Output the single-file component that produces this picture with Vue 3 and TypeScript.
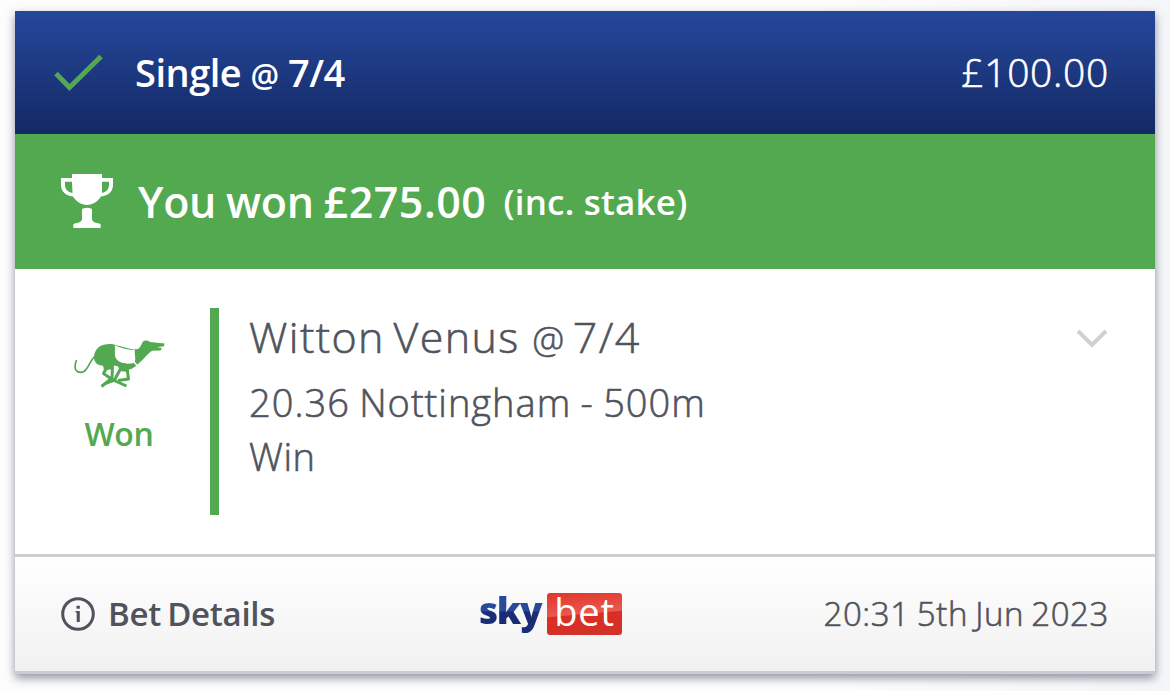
<script setup lang="ts">
interface Selection {
  name: string
  odds: string
  event: string
  market: string
}

const selection: Selection = {
  name: 'Witton Venus',
  odds: '7/4',
  event: '20.36 Nottingham - 500m',
  market: 'Win',
}
</script>

<template>
  <main class="page">
    <article class="slip">
      <header class="head">
        <svg class="tick" width="50" height="40" viewBox="0 0 50 40">
          <path d="M2 19.500 15.500 33.500 47 2.500" fill="none" stroke="#52a950" stroke-width="5" />
        </svg>
        <h1 class="bet-type">Single <span class="at">@</span> {{ selection.odds }}</h1>
        <span class="stake">£100.00</span>
      </header>

      <section class="result">
        <svg class="trophy" width="54" height="56" viewBox="0 0 54 56" fill="#fff">
          <path d="M12 1H42V5H53V12C53 18 48.500 23 41 23.500 38 28 33 32 27 32S16 28 13 23.500C5.500 23 1 18 1 12V5H12Z M12 8.700H5V12C5 16 7.500 19 12.500 20Z M42 8.700V20C46.500 19 49 16 49 12V8.700Z" fill-rule="evenodd" />
          <path d="M22 36Q27 33.500 32 36V46.500Q33 49.500 37 50 40.700 50.500 40.700 52V55H13.300V52Q13.300 50.500 17 50 21 49.500 22 46.500Z" />
        </svg>
        <strong class="won">You won <span class="amount">£275.00</span></strong>
        <span class="inc">(inc. stake)</span>
      </section>

      <section class="pick">
        <div class="status">
          <svg class="dog" width="94" height="52" viewBox="0 0 94 52">
            <path d="M4.500 22C3 26 2.500 29 3.800 32 6 35 11 35.500 14 31.500 17 28 18 23 23 18" fill="none" stroke="#52a950" stroke-width="1.700" />
            <path d="M22 19C22.500 10 29 5.500 40 6L51 9 61 11.500 66 11C69 9 70 5 71 3.500 73.500 2 76 2.500 78 4L92.500 5.500 92 8.300 85 9.200 90 10 88.500 12.500 80 12.800C75 16 69 25 61 30 57 32.500 51 31.500 48 29.500 43 26.500 40 27.500 35 28 27 28 22 26 22 19Z" fill="#52a950" />
            <path d="M42.800 7.200C48 9.500 56 12.300 63 12 62 16 64.500 21 62.500 24.800 56 26.500 48 26 44 20.500 42 16 43.500 12 42.800 7.200Z" fill="#fff" />
            <path d="M61.500 23.500 65.500 28" stroke="#fff" stroke-width="1.500" />
            <path d="M36 27 31.500 35.500 41 42 54.500 48 M40.500 26.500 40 40 29.500 48.500 M49.500 29 42.500 42 32 46 M55 30 56.500 41 46 42.500" fill="none" stroke="#52a950" stroke-width="3" stroke-linejoin="round" />
            <path d="M31 27 42 27 40.500 31 35 32 32.500 35Z M46 28 57 30 56 34 48 33Z" fill="#52a950" />
          </svg>
          <span class="status-text">Won</span>
        </div>
        <div class="info">
          <h2 class="name">{{ selection.name }} <span class="at">@</span> {{ selection.odds }}</h2>
          <p class="event">{{ selection.event }}</p>
          <p class="market">{{ selection.market }}</p>
        </div>
        <svg class="chevron" width="32" height="20" viewBox="0 0 32 20">
          <path d="M2 2 16 16 30 2" fill="none" stroke="#cfd0d3" stroke-width="4" />
        </svg>
      </section>

      <footer class="foot">
        <div class="details">
          <svg width="34" height="34" viewBox="0 0 34 34">
            <circle cx="17" cy="17" r="15.300" fill="none" stroke="#50535c" stroke-width="3" />
            <path d="M15.500 8.700h3.300v3h-3.300Z M14.500 14h4.300v11h-3.100v-9.500h-1.200Z" fill="#50535c" />
          </svg>
          <span class="details-text">Bet Details</span>
        </div>
        <div class="logo">
          <span class="sky">sky</span>
          <span class="bet"><span class="bet-word">bet</span></span>
        </div>
        <time class="date">20:31 5th Jun 2023</time>
      </footer>
    </article>
  </main>
</template>

<style>
body {
  margin: 0;
  background: #fcfcfe;
}
</style>

<style scoped>
.page {
  box-sizing: border-box;
  width: 1170px;
  height: 691px;
  padding: 11px 15px 0;
  overflow: hidden;
  background: linear-gradient(90deg, #fdfdfe 0%, #fdfdfe 70%, #f5f6fa 100%);
  font-family: 'Open Sans', 'Noto Sans', sans-serif;
  color: #50535c;
  white-space: nowrap;
}
.slip {
  width: 1140px;
  height: 663px;
  box-sizing: border-box;
  display: flex;
  flex-direction: column;
  background: #fff;
  border-bottom: 3px solid #c9ccd1;
  box-shadow: 0 4px 9px rgba(60, 68, 88, 0.58);
}
h1, h2, p {
  margin: 0;
  font-weight: 300;
}
.stake,
.name,
.event,
.market,
.date {
  font-weight: 300;
  -webkit-text-stroke: 0.6px currentColor;
}
.at {
  font-size: 0.84em;
}
.head {
  height: 123px;
  box-sizing: border-box;
  display: flex;
  align-items: center;
  padding: 0 46px 2px 39px;
  background: linear-gradient(#25479b, #142964);
  color: #fff;
}
.tick {
  margin-top: 4px;
}
.bet-type {
  margin-left: 31px;
  font-size: 38px;
  font-weight: 600;
  letter-spacing: -0.5px;
}
.stake {
  margin-left: auto;
  font-size: 39px;
  letter-spacing: 0.7px;
}
.result {
  height: 135px;
  display: flex;
  align-items: center;
  padding-left: 45px;
  background: #53a950;
  color: #fff;
}
.trophy {
  margin-top: -2px;
}
.won {
  margin-left: 24px;
  font-size: 43px;
  font-weight: 600;
  letter-spacing: -0.3px;
  word-spacing: -1px;
}
.amount {
  letter-spacing: 0.5px;
}
.inc {
  margin-left: 17px;
  font-size: 35px;
  font-weight: 600;
  letter-spacing: 0.2px;
}
.pick {
  height: 285px;
  box-sizing: border-box;
  display: flex;
  align-items: flex-start;
  padding: 39px 47px 0 0;
}
.status {
  width: 195px;
  padding-top: 30px;
  display: flex;
  flex-direction: column;
  align-items: center;
  box-sizing: border-box;
  padding-left: 13px;
}
.status-text {
  margin-top: 22px;
  line-height: 44px;
  font-size: 32px;
  font-weight: 600;
  letter-spacing: -0.3px;
  color: #52a950;
}
.info {
  flex: 1;
  height: 207px;
  box-sizing: border-box;
  border-left: 9px solid #53a950;
  padding-left: 30px;
}
.name {
  font-size: 43px;
  line-height: 58px;
  margin-bottom: 7px;
  letter-spacing: 1.4px;
  word-spacing: -4px;
}
.name .at {
  margin-left: 4px;
  letter-spacing: 0;
}
.event,
.market {
  font-size: 38px;
  line-height: 54px;
  letter-spacing: 1px;
  word-spacing: -1.5px;
}
.market {
  letter-spacing: 0.5px;
}
.chevron {
  margin-top: 21px;
}
.foot {
  flex: 1;
  border-top: 3px solid #cdced0;
  background: linear-gradient(#fff, #f1f1f1);
  display: grid;
  grid-template-columns: 418px auto 1fr;
  align-items: center;
  padding: 0 46px 1px;
}
.details {
  display: flex;
  align-items: center;
}
.details-text {
  margin-left: 13px;
  font-size: 33px;
  font-weight: 600;
  letter-spacing: -0.3px;
  word-spacing: -2px;
}
.logo {
  display: flex;
  align-items: center;
}
.sky {
  width: 64px;
  height: 46px;
  line-height: 38px;
  font-size: 37px;
  font-weight: 800;
  letter-spacing: -1.3px;
  color: transparent;
  background: linear-gradient(#29499b 0 44%, #1a2c74 45% 100%);
  background-clip: text;
}
.bet {
  margin-left: 4px;
  width: 75px;
  height: 42px;
  border-radius: 3px;
  background: linear-gradient(175deg, #e2352b, #e9594f 49%, #dd2d23 51%, #cf332b);
  color: #fff;
  display: flex;
  justify-content: center;
}
.bet-word {
  font-size: 38px;
  line-height: 36px;
  font-weight: 400;
  letter-spacing: 0.8px;
}
.date {
  justify-self: end;
  font-size: 33px;
  letter-spacing: 0.6px;
  word-spacing: -2px;
}
</style>
